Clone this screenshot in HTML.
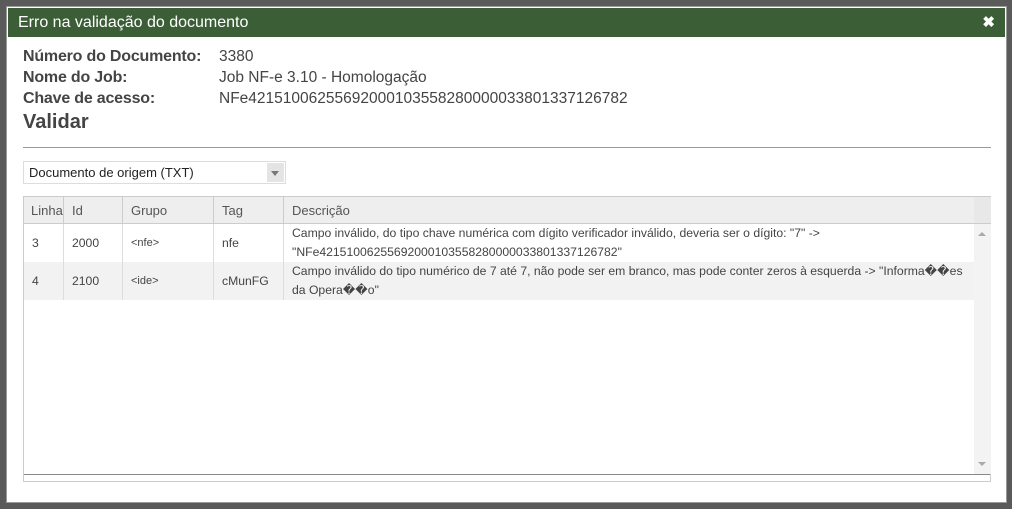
<!DOCTYPE html>
<html><head><meta charset="utf-8"><style>
*{margin:0;padding:0;box-sizing:border-box}
body{width:1012px;height:509px;background:#5a5a5a;position:relative;overflow:hidden;font-family:"Liberation Sans",sans-serif;color:#444}
.dlg{position:absolute;left:6px;top:6px;width:1001px;height:497px;background:#fff;border:1px solid #999}
.hdr{position:absolute;left:1px;top:1px;right:1px;height:29px;background:#3b5e37;color:#fff;font-size:16px;line-height:29px;padding-left:10px}
.x{position:absolute;right:10px;top:0;font-weight:bold;font-size:15px}
.lbl{position:absolute;left:16px;font-weight:bold;font-size:16px;color:#444;letter-spacing:-0.2px}
.val{position:absolute;left:212px;font-size:15.5px;color:#444}
.ttl{position:absolute;left:16px;top:104px;font-size:20px;font-weight:bold;color:#444}
.hr{position:absolute;left:16px;top:140px;width:968px;height:1px;background:#999}
.sel{position:absolute;left:16px;top:154px;width:263px;height:23px;border:1px solid #ddd;font-size:13px;line-height:21px;padding-left:5px;color:#222}
.sel .ar{position:absolute;right:1px;top:1px;width:17px;height:19px;background:#e4e4e4}
.sel .ar:after{content:"";position:absolute;left:4px;top:8px;border:4px solid transparent;border-top:5px solid #777}
.tbl{position:absolute;left:16px;top:189px;width:968px;height:286px;border:1px solid #ccc}
.row{position:absolute;left:0;width:950px;font-size:12.2px;color:#444}
.c{position:absolute;top:0;height:100%;padding-left:8px;display:flex;align-items:center}
.th .c{border-right:1px solid #ccc;font-size:13px;color:#555}
.td .c{border-right:1px solid #ddd}
.sb{position:absolute;left:950px;top:27px;width:17px;height:250px;background:#f3f3f3}
.sbh{position:absolute;left:950px;top:0;width:17px;height:27px;background:#e8e8e8;border-bottom:1px solid #ccc}
.up{position:absolute;left:4px;top:8px;border:4px solid transparent;border-bottom:4px solid #aaa;border-top:0}
.dn{position:absolute;left:4px;bottom:8px;border:4px solid transparent;border-top:4px solid #aaa;border-bottom:0}
.bline{position:absolute;left:0;top:277px;width:966px;height:1px;background:#888}
</style></head><body>
<div class="dlg">
<div class="hdr">Erro na validação do documento<span class="x">✖</span></div>
<div class="lbl" style="top:41px">Número do Documento:</div><div class="val" style="top:41px">3380</div>
<div class="lbl" style="top:62px">Nome do Job:</div><div class="val" style="top:62px">Job NF-e 3.10 - Homologação</div>
<div class="lbl" style="top:83px">Chave de acesso:</div><div class="val" style="top:83px">NFe42151006255692000103558280000033801337126782</div>
<div class="ttl">Validar</div>
<div class="hr"></div>
<div class="sel">Documento de origem (TXT)<div class="ar"></div></div>
<div class="tbl">
<div class="row th" style="top:0;height:27px;background:#eee;width:950px;border-bottom:1px solid #ccc">
<div class="c" style="left:0;width:40px;padding-left:7px">Linha</div>
<div class="c" style="left:40px;width:59px">Id</div>
<div class="c" style="left:99px;width:91px">Grupo</div>
<div class="c" style="left:190px;width:70px">Tag</div>
<div class="c" style="left:260px;width:690px;border:none">Descrição</div>
</div>
<div class="row td" style="top:27px;height:38px">
<div class="c" style="left:0;width:40px">3</div>
<div class="c" style="left:40px;width:59px">2000</div>
<div class="c" style="left:99px;width:91px;font-size:11px">&lt;nfe&gt;</div>
<div class="c" style="left:190px;width:70px">nfe</div>
<div class="c" style="left:260px;width:690px;border:none;line-height:19px">Campo inválido, do tipo chave numérica com dígito verificador inválido, deveria ser o dígito: "7" -&gt;<br>"NFe42151006255692000103558280000033801337126782"</div>
</div>
<div class="row td" style="top:65px;height:38px;background:#f2f2f2">
<div class="c" style="left:0;width:40px">4</div>
<div class="c" style="left:40px;width:59px">2100</div>
<div class="c" style="left:99px;width:91px;font-size:11px">&lt;ide&gt;</div>
<div class="c" style="left:190px;width:70px">cMunFG</div>
<div class="c" style="left:260px;width:690px;border:none;line-height:19px">Campo inválido do tipo numérico de 7 até 7, não pode ser em branco, mas pode conter zeros à esquerda -&gt; "Informa��es<br>da Opera��o"</div>
</div>
<div class="sbh"></div>
<div class="sb"><div class="up"></div><div class="dn"></div></div>
<div class="bline"></div>
</div>
</div>
</body></html>
